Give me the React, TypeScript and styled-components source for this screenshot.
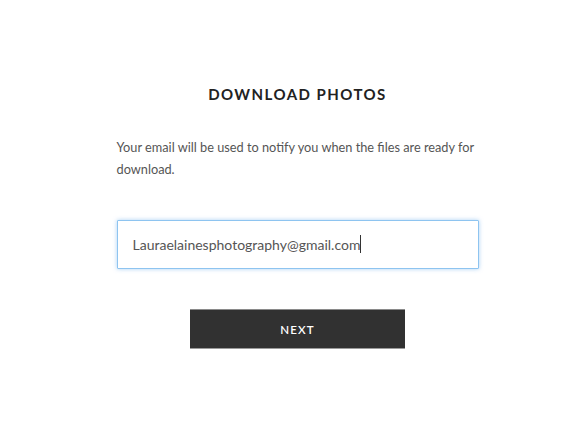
import React from "react";
import styled, { createGlobalStyle } from "styled-components";

const GlobalStyle = createGlobalStyle`
  html, body {
    margin: 0;
    padding: 0;
    background: #ffffff;
  }
  body {
    font-family: Lato, "Liberation Sans", sans-serif;
  }
`;

const Page = styled.div`
  width: 583px;
  height: 448px;
  display: flex;
  justify-content: center;
  box-sizing: border-box;
  padding: 84px 0 0 12px;
`;

const Form = styled.div`
  width: 362px;
  display: flex;
  flex-direction: column;
  align-items: center;
`;

const Title = styled.h2`
  margin: 0;
  font-size: 15px;
  line-height: 20px;
  font-weight: 700;
  letter-spacing: 1.45px;
  color: #222222;
`;

const Note = styled.p`
  margin: 32px 0 0;
  align-self: stretch;
  font-size: 12.75px;
  line-height: 22px;
  color: #555555;
`;

const Field = styled.div`
  position: relative;
  margin-top: 40px;
  align-self: stretch;
  height: 49px;
`;

const EmailInput = styled.input`
  width: 100%;
  height: 100%;
  box-sizing: border-box;
  padding: 0 15px;
  border: 1px solid #8ec4f0;
  border-radius: 1px;
  box-shadow: 0 0 4px rgba(100, 170, 235, 0.55);
  font-family: Lato, "Liberation Sans", sans-serif;
  font-size: 14px;
  color: #555555;
  caret-color: transparent;
  outline: none;
  background: #ffffff;
`;

const CaretLayer = styled.div`
  position: absolute;
  inset: 0;
  padding: 0 16px;
  display: flex;
  align-items: center;
  pointer-events: none;
  font-size: 14px;
`;

const Ghost = styled.span`
  visibility: hidden;
  white-space: pre;
`;

const Caret = styled.span`
  width: 1px;
  height: 18px;
  margin-top: -2px;
  background: #333333;
`;

const NextButton = styled.button`
  margin-top: 40px;
  width: 215px;
  height: 40px;
  border: none;
  border-top: 1px solid #8a8a8a;
  border-bottom: 1px solid #9a9a9a;
  background: #313131;
  color: #ffffff;
  font-family: Lato, "Liberation Sans", sans-serif;
  font-size: 11.5px;
  font-weight: 600;
  letter-spacing: 1.2px;
  cursor: pointer;
`;

const email = "Lauraelainesphotography@gmail.com";

export default function App() {
  return (
    <>
      <GlobalStyle />
      <Page>
        <Form>
          <Title>DOWNLOAD PHOTOS</Title>
          <Note>
            Your email will be used to notify you when the files are ready for
            download.
          </Note>
          <Field>
            <EmailInput type="email" defaultValue={email} />
            <CaretLayer>
              <Ghost>{email}</Ghost>
              <Caret />
            </CaretLayer>
          </Field>
          <NextButton>NEXT</NextButton>
        </Form>
      </Page>
    </>
  );
}
